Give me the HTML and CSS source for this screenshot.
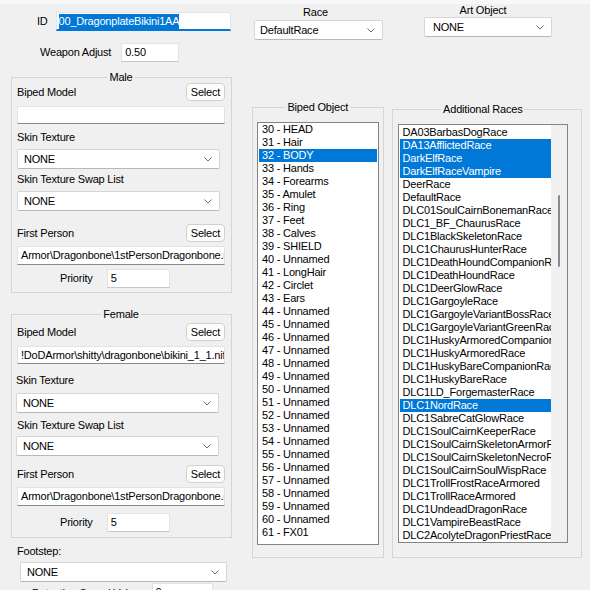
FILE: index.html
```html
<html>
<head>
	<meta charset="utf-8">
	<title>Armor Addon</title>
	<link rel="stylesheet" href="styles.css">
</head>
<body>
<div class="window">
	<div class="left">
		<div class="id-row">
			<span class="lbl-id">ID</span>
			<div class="edit edit-id"><span class="sel-text">00_DragonplateBikini1AA</span></div>
		</div>
		<div class="weapon-row">
			<span class="lbl-weapon">Weapon Adjust</span>
			<div class="edit edit-small">0.50</div>
		</div>

		<fieldset class="group male">
			<legend>Male</legend>
			<div class="btn-row"><span>Biped Model</span><div class="btn">Select</div></div>
			<div class="edit path model"></div>
			<div class="lbl l1">Skin Texture</div>
			<div class="combo c1">NONE<svg width="8" height="5"><polyline points="0.5,0.5 4,4 7.5,0.5"/></svg></div>
			<div class="lbl l2">Skin Texture Swap List</div>
			<div class="combo c2">NONE<svg width="8" height="5"><polyline points="0.5,0.5 4,4 7.5,0.5"/></svg></div>
			<div class="btn-row first"><span>First Person</span><div class="btn">Select</div></div>
			<div class="edit path fp">Armor\Dragonbone\1stPersonDragonbone.nif</div>
			<div class="prio-row"><span>Priority</span><div class="edit edit-prio">5</div></div>
		</fieldset>

		<fieldset class="group female">
			<legend>Female</legend>
			<div class="btn-row"><span>Biped Model</span><div class="btn">Select</div></div>
			<div class="edit path model">!DoDArmor\shitty\dragonbone\bikini_1_1.nif</div>
			<div class="lbl l1">Skin Texture</div>
			<div class="combo c1">NONE<svg width="8" height="5"><polyline points="0.5,0.5 4,4 7.5,0.5"/></svg></div>
			<div class="lbl l2">Skin Texture Swap List</div>
			<div class="combo c2">NONE<svg width="8" height="5"><polyline points="0.5,0.5 4,4 7.5,0.5"/></svg></div>
			<div class="btn-row first"><span>First Person</span><div class="btn">Select</div></div>
			<div class="edit path fp">Armor\Dragonbone\1stPersonDragonbone.nif</div>
			<div class="prio-row"><span>Priority</span><div class="edit edit-prio">5</div></div>
		</fieldset>

		<div class="lbl footstep">Footstep:</div>
		<div class="combo combo-foot">NONE<svg width="8" height="5"><polyline points="0.5,0.5 4,4 7.5,0.5"/></svg></div>
		<div class="detect-row"><span>Detection Sound Value</span><div class="edit edit-detect">0</div></div>
	</div>

	<div class="right">
		<div class="top-row">
			<div class="race">
				<div class="cap">Race</div>
				<div class="combo combo-race">DefaultRace<svg width="8" height="5"><polyline points="0.5,0.5 4,4 7.5,0.5"/></svg></div>
			</div>
			<div class="art">
				<div class="cap">Art Object</div>
				<div class="combo combo-art">NONE<svg width="8" height="5"><polyline points="0.5,0.5 4,4 7.5,0.5"/></svg></div>
			</div>
		</div>

		<div class="groups">
			<fieldset class="group biped">
				<legend>Biped Object</legend>
				<div class="list list-biped">
					<div class="item">30 - HEAD</div>
					<div class="item">31 - Hair</div>
					<div class="item on">32 - BODY</div>
					<div class="item">33 - Hands</div>
					<div class="item">34 - Forearms</div>
					<div class="item">35 - Amulet</div>
					<div class="item">36 - Ring</div>
					<div class="item">37 - Feet</div>
					<div class="item">38 - Calves</div>
					<div class="item">39 - SHIELD</div>
					<div class="item">40 - Unnamed</div>
					<div class="item">41 - LongHair</div>
					<div class="item">42 - Circlet</div>
					<div class="item">43 - Ears</div>
					<div class="item">44 - Unnamed</div>
					<div class="item">45 - Unnamed</div>
					<div class="item">46 - Unnamed</div>
					<div class="item">47 - Unnamed</div>
					<div class="item">48 - Unnamed</div>
					<div class="item">49 - Unnamed</div>
					<div class="item">50 - Unnamed</div>
					<div class="item">51 - Unnamed</div>
					<div class="item">52 - Unnamed</div>
					<div class="item">53 - Unnamed</div>
					<div class="item">54 - Unnamed</div>
					<div class="item">55 - Unnamed</div>
					<div class="item">56 - Unnamed</div>
					<div class="item">57 - Unnamed</div>
					<div class="item">58 - Unnamed</div>
					<div class="item">59 - Unnamed</div>
					<div class="item">60 - Unnamed</div>
					<div class="item">61 - FX01</div>
				</div>
			</fieldset>

			<fieldset class="group races">
				<legend>Additional Races</legend>
				<div class="list list-races">
					<div class="items">
						<div class="item">DA03BarbasDogRace</div>
						<div class="item on">DA13AfflictedRace</div>
						<div class="item on">DarkElfRace</div>
						<div class="item on">DarkElfRaceVampire</div>
						<div class="item">DeerRace</div>
						<div class="item">DefaultRace</div>
						<div class="item">DLC01SoulCairnBonemanRace</div>
						<div class="item">DLC1_BF_ChaurusRace</div>
						<div class="item">DLC1BlackSkeletonRace</div>
						<div class="item">DLC1ChaurusHunterRace</div>
						<div class="item">DLC1DeathHoundCompanionRace</div>
						<div class="item">DLC1DeathHoundRace</div>
						<div class="item">DLC1DeerGlowRace</div>
						<div class="item">DLC1GargoyleRace</div>
						<div class="item">DLC1GargoyleVariantBossRace</div>
						<div class="item">DLC1GargoyleVariantGreenRace</div>
						<div class="item">DLC1HuskyArmoredCompanionRace</div>
						<div class="item">DLC1HuskyArmoredRace</div>
						<div class="item">DLC1HuskyBareCompanionRace</div>
						<div class="item">DLC1HuskyBareRace</div>
						<div class="item">DLC1LD_ForgemasterRace</div>
						<div class="item on">DLC1NordRace</div>
						<div class="item">DLC1SabreCatGlowRace</div>
						<div class="item">DLC1SoulCairnKeeperRace</div>
						<div class="item">DLC1SoulCairnSkeletonArmorRace</div>
						<div class="item">DLC1SoulCairnSkeletonNecroRace</div>
						<div class="item">DLC1SoulCairnSoulWispRace</div>
						<div class="item">DLC1TrollFrostRaceArmored</div>
						<div class="item">DLC1TrollRaceArmored</div>
						<div class="item">DLC1UndeadDragonRace</div>
						<div class="item">DLC1VampireBeastRace</div>
						<div class="item">DLC2AcolyteDragonPriestRace</div>
					</div>
					<div class="scroll"><div class="thumb"></div></div>
				</div>
			</fieldset>
		</div>
	</div>
</div>
</body>
</html>
```
FILE: styles.css
```css
html, body{
	margin: 0;
	height: 100%;
	overflow: hidden;
	background: #f0f0f0;
}
body{
	font-family: "Liberation Sans", Arial, sans-serif;
	font-size: 11px;
	letter-spacing: -0.2px;
	line-height: 13px;
	color: #000;
}
.window{
	display: flex;
	align-items: flex-start;
	padding-left: 11px;
	border-top: 4px solid #f8f8f8;
}

/* plain controls */
.edit{
	box-sizing: border-box;
	background: #fff;
	border: 1px solid #e3e3e3;
	border-bottom-color: #8a8a8a;
	height: 19px;
	padding: 2px 3px;
	white-space: nowrap;
	overflow: hidden;
}
.combo{
	box-sizing: border-box;
	display: flex;
	align-items: center;
	justify-content: space-between;
	height: 20px;
	padding: 0 7px 0 6px;
	background: #fff;
	border: 1px solid #d6d6d6;
	border-bottom-color: #b8b8b8;
	border-radius: 2px;
}
.combo svg polyline{
	fill: none;
	stroke: #6b6b6b;
	stroke-width: 1;
}
.btn{
	box-sizing: border-box;
	width: 39px;
	height: 18px;
	line-height: 16px;
	text-align: center;
	background: #fdfdfd;
	border: 1px solid #d0d0d0;
	border-radius: 4px;
}

/* left column */
.left{
	width: 221px;
	display: flex;
	flex-direction: column;
}
.id-row, .weapon-row{
	display: flex;
	align-items: center;
	height: 19px;
}
.id-row{margin-top: 8px}
.lbl-id{margin-left: 26px}
.edit-id{
	margin-left: 8px;
	width: 175px;
	padding: 1px 2px 0;
	border-color: #e3e3e3;
	border-bottom: 2px solid #0078d7;
}
.sel-text{
	display: inline-block;
	background: #0078d7;
	color: #fff;
	line-height: 15px;
}
.weapon-row{margin-top: 12px}
.lbl-weapon{margin-left: 29px}
.edit-small{
	margin-left: 10px;
	width: 58px;
	border-bottom-color: #c8c8c8;
}

.group{
	box-sizing: border-box;
	margin: 0;
	border: 1px solid #d5d5d5;
	min-width: 0;
}
.group legend{
	margin: 0 auto;
	padding: 0 2px;
	line-height: 11px;
}
.male, .female{
	width: 221px;
	padding: 0 6px 4px 5px;
}
.male{margin-top: 10px}
.female{margin-top: 16px; padding-bottom: 5px}

.btn-row{
	display: flex;
	align-items: center;
	justify-content: space-between;
	height: 18px;
}
.lbl{height: 13px}
.path{height: 18px; margin-top: 5px}
.fp{height: 19px; margin-top: 4px}
.combo.c1, .combo.c2{width: 203px}
.male .l1{margin-top: 7px}
.male .c1{margin-top: 5px}
.male .l2{margin-top: 4px}
.male .c2{margin-top: 5px}
.male .first{margin-top: 13px}
.female .btn-row{margin-top: 3px}
.female .l1{margin-top: 10px; margin-left: -1px}
.female .c1{margin-top: 6px; margin-left: -1px}
.female .l2{margin-top: 6px}
.female .c2{margin-top: 4px; margin-left: -1px}
.female .first{margin-top: 9px}
.female .prio-row{margin-top: 7px}

.prio-row{
	display: flex;
	align-items: center;
	height: 19px;
	margin-top: 4px;
}
.prio-row span{margin-left: 43px}
.edit-prio{
	margin-left: 14px;
	width: 63px;
	border-bottom-color: #c8c8c8;
}

.footstep{margin: 7px 0 0 6px}
.combo-foot{
	margin: 4px 0 0 9px;
	width: 207px;
}
.detect-row{
	display: flex;
	align-items: flex-start;
	margin-top: 1px;
}
.detect-row span{margin: 4px 0 0 21px}
.edit-detect{
	margin-left: 12px;
	width: 61px;
	height: 20px;
}

/* right column */
.right{
	margin-left: 20px;
	width: 330px;
}
.top-row{
	display: flex;
	align-items: flex-start;
}
.cap{text-align: center}
.race{
	margin: 2px 0 0 2px;
	width: 129px;
}
.race .cap{margin-right: 6px}
.race .combo{margin-top: 1px; padding-left: 5px}
.art{
	margin-left: 41px;
	width: 128px;
}
.art .cap{margin-right: 10px}
.art .combo{padding-left: 8px}

.groups{
	display: flex;
	align-items: flex-start;
	margin-top: 62px;
}
.biped{
	width: 132px;
	padding: 0 4px 12px 4px;
}
.races{
	width: 191px;
	margin-top: 2px;
	margin-left: 8px;
	padding: 0 13px 14px 5px;
}

.list{
	box-sizing: border-box;
	margin-top: 9px;
	background: #fff;
	border: 1px solid #838383;
	padding: 0 1px;
	overflow: hidden;
	white-space: nowrap;
}
.list .item{
	height: 13px;
	padding-left: 3px;
	overflow: hidden;
}
.list .item.on{
	background: #0078d7;
	color: #fff;
}
.list-biped{height: 423px}
.list-races{
	display: flex;
	height: 419px;
	padding: 1px 0 0 1px;
}
.items{
	width: 151px;
	overflow: hidden;
}
.scroll{
	flex: 1;
	margin-top: -1px;
	background: #f0f0f0;
	padding-top: 70px;
}
.thumb{
	width: 2px;
	height: 72px;
	margin-left: 7px;
	border-radius: 1px;
	background: #8a8a8a;
}
```
